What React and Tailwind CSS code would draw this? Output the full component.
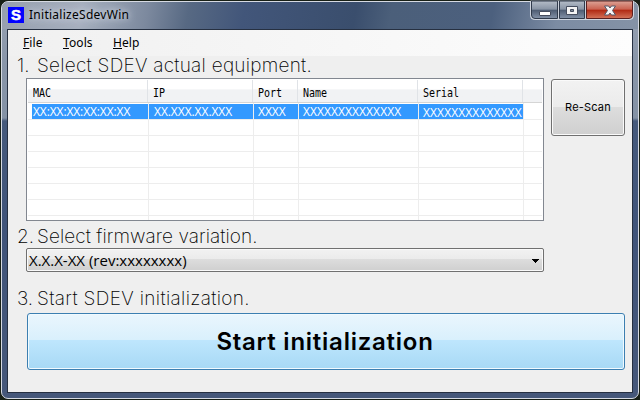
import React from 'react';

const columns = [
  { title: 'MAC', value: 'XX:XX:XX:XX:XX:XX', width: 'w-[120px]', cell: 'w-[121px] pl-[5px] tracking-[-0.1px]' },
  { title: 'IP', value: 'XX.XXX.XX.XXX', width: 'w-[105px]', cell: 'w-[105px] pl-[5px] tracking-[-0.05px]' },
  { title: 'Port', value: 'XXXX', width: 'w-[45px]', cell: 'w-[45px] pl-[4px]' },
  { title: 'Name', value: 'XXXXXXXXXXXXXX', width: 'w-[120px]', cell: 'w-[120px] pl-[4px] tracking-[0.08px]' },
  { title: 'Serial', value: 'XXXXXXXXXXXXXX', width: 'w-[105px]', cell: 'w-[105px] pl-[4px] pt-px tracking-[0.12px]' },
];

function CaptionButtons() {
  return (
    <svg width="104" height="20" viewBox="0 0 104 20" className="block shrink-0">
      <defs>
        <linearGradient id="steel" x1="0" y1="0" x2="0" y2="1">
          <stop offset="0" stopColor="#b5bdc8" />
          <stop offset=".48" stopColor="#8793a4" />
          <stop offset=".5" stopColor="#4c5a70" />
          <stop offset="1" stopColor="#8493a9" />
        </linearGradient>
        <linearGradient id="danger" x1="0" y1="0" x2="0" y2="1">
          <stop offset="0" stopColor="#dda497" />
          <stop offset=".48" stopColor="#c9604f" />
          <stop offset=".5" stopColor="#af2610" />
          <stop offset="1" stopColor="#d4745a" />
        </linearGradient>
      </defs>
      <path d="M.5 1v14.500q0 4 4 4h95q4 0 4-4V1z" fill="#d0d5dd" stroke="#cfd5df" />
      <path d="M1.500 1h26v17.500H5q-3.500 0-3.500-3.500z" fill="url(#steel)" stroke="#303b4c" />
      <path d="M29.500 1h25v17.500h-25z" fill="url(#steel)" stroke="#303b4c" />
      <path d="M56.500 1h46v14q0 3.500-3.500 3.500H56.500z" fill="url(#danger)" stroke="#5b2020" />
      <path d="M28.500 1v18M55.500 1v18" stroke="#ccd2dc" />
      <rect x="9.500" y="11.500" width="11" height="4" rx=".5" fill="#fff" stroke="#454d5e" />
      <path d="M36.500 6.500h11v8h-11z" fill="#f4f4f4" stroke="#454d5e" />
      <path d="M40.500 9.500h3v2h-3z" fill="#7f8a9a" stroke="#454d5e" />
      <path d="M74.500 6h4l1.500 2 1.500-2h4L82.500 10.500l3 4.500h-4L80 13l-1.500 2h-4l3-4.500z" fill="#f6f6f6" stroke="#535666" />
    </svg>
  );
}

function Heading({ number, children, className }) {
  return (
    <h2 className={`flex pl-[9px] font-['Inter',sans-serif] text-[19px] font-extralight whitespace-nowrap text-black ${className}`}>
      <span className="w-[20px] shrink-0 tracking-normal">{number}</span>
      <span>{children}</span>
    </h2>
  );
}

function DeviceList() {
  return (
    <div className="h-[143px] w-[518px] shrink-0 border border-[#828790] bg-white pt-px pr-px pl-px">
      <div className="flex h-[23px] border-b border-[#d5d5d5] bg-linear-to-b from-white from-40% to-[#f1f2f4] to-45% text-black">
        {columns.map((c) => (
          <div key={c.title} className={`${c.width} shrink-0 border-r border-[#e0e3e7] pl-[5px] leading-[21px]`}>
            <span className="inline-block scale-y-115 font-['DejaVu_Sans_Mono',monospace] text-[10px]">{c.title}</span>
          </div>
        ))}
      </div>
      <div className="relative h-[117px]">
        <div className="flex flex-col">
          {[0, 1, 2, 3, 4, 5, 6].map((r) => (
            <div key={r} className={`${r === 0 ? 'h-[17px]' : 'h-4'} border-b border-[#ededed]`} />
          ))}
        </div>
        <div className="absolute top-px left-[4px] h-[15px] w-[491px] bg-[#3399ff]" />
        <div className="absolute inset-0 flex">
          {columns.map((c) => (
            <div
              key={c.title}
              className={`${c.cell} shrink-0 border-r border-[#ededed] font-['Open_Sans',sans-serif] text-[12px] leading-[17px] whitespace-nowrap text-white`}
            >
              {c.value}
            </div>
          ))}
        </div>
      </div>
    </div>
  );
}

export default function App() {
  return (
    <div className="h-[400px] w-[640px] overflow-hidden bg-[#182016] p-px">
      <div className="h-[398px] w-[638px] rounded-[7px] border border-[#d6dae2] bg-[linear-gradient(180deg,#98a2b2_0px,#8996a9_60px,#8492a5_116px,#465a7c_119px,#40547a_220px,#46587a_398px)] px-[5px]">
        <header className="-mx-[5px] flex h-[27px] items-start rounded-t-[6px] bg-[linear-gradient(100deg,#969fae_0px,#a6afbe_80px,#7c899e_145px,#576983_185px,#42567a_240px,#3a4e6d_350px,#4b5f7a_385px,#4c607e_485px,#7c8ca3_550px,#8593a6_636px)] pr-[4px] pl-[6px]">
          <div className="mt-[5px] flex h-4 w-4 items-center justify-center bg-[#0000ff] font-['Liberation_Sans',sans-serif] text-[15px] leading-4 font-bold text-white [-webkit-text-stroke:0.5px_white]">S</div>
          <div className="mt-[4px] ml-[5px] font-['Noto_Sans',sans-serif] text-[12px] leading-[17px] tracking-[0.27px] text-black [text-shadow:0_0_6px_#d5dbe5,0_0_10px_#d5dbe5]">InitializeSdevWin</div>
          <div className="-mt-[2px] ml-auto"><CaptionButtons /></div>
        </header>
        <main className="h-[364px] w-[626px] border border-[#263041] bg-[#efefef]">
          <nav className="flex h-[26px] items-center bg-linear-to-r from-[#f0f0f0] to-[#fdfdfd] pl-[15px] font-['Noto_Sans',sans-serif] text-[12px] tracking-[0.1px] text-black">
            <span className="w-[40px]"><u>F</u>ile</span>
            <span className="w-[50px]"><u>T</u>ools</span>
            <span><u>H</u>elp</span>
          </nav>
          <Heading number="1." className="h-[22px] leading-[20px] tracking-[0.25px]">Select SDEV actual equipment.</Heading>
          <div className="flex gap-[7px] pl-[18px]">
            <DeviceList />
            <button className="mt-px h-[57px] w-[74px] rounded-[3px] border border-[#707070] bg-[linear-gradient(#f2f2f2_0%,#ebebeb_49%,#dddddd_50%,#cfcfcf_100%)] font-['Inter',sans-serif] text-[11px] tracking-[0.2px] text-black shadow-[inset_0_0_0_1px_#fafafa]">Re-Scan</button>
          </div>
          <Heading number="2." className="h-[27px] leading-[31px] tracking-[0.07px]">Select firmware variation.</Heading>
          <div className="ml-[18px] flex h-[24px] w-[518px] items-center justify-between rounded-[2px] border border-[#707070] bg-[linear-gradient(#f2f2f2_0%,#ebebeb_45%,#dddddd_46%,#cfcfcf_100%)] pr-[4px] pl-[2px] font-['Open_Sans',sans-serif] text-[15px] leading-[22px] text-black shadow-[inset_0_0_0_1px_#fafafa]">
            <span>X.X.X-XX (rev:xxxxxxxx)</span>
            <svg width="8" height="5" viewBox="0 0 8 5" shapeRendering="crispEdges" className="mt-[3px]"><path d="M0 0h8L4 4z" fill="#000" /></svg>
          </div>
          <Heading number="3." className="h-[41px] leading-[54px] tracking-[0.34px]">Start SDEV initialization.</Heading>
          <button className="ml-[19px] block h-[57px] w-[598px] rounded-[3px] border border-[#3c7fb1] bg-[linear-gradient(#eaf6fd_0%,#d9f0fc_47%,#bee6fd_48%,#a7d9f5_100%)] pr-[2px] font-['Inter',sans-serif] text-[24px] leading-[56px] font-semibold tracking-[0.75px] text-black shadow-[inset_0_0_0_1px_#f0faff]">Start initialization</button>
        </main>
      </div>
    </div>
  );
}
